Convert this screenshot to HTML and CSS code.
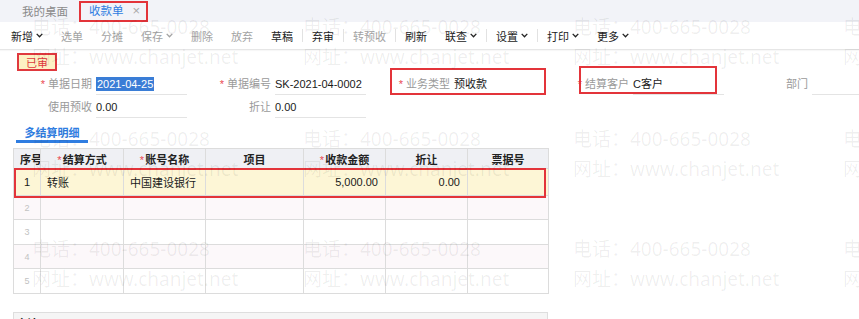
FILE: index.html
```html
<!DOCTYPE html>
<html lang="zh-CN">
<head>
<meta charset="utf-8">
<title>收款单</title>
<link rel="stylesheet" href="styles.css">
</head>
<body>
<div class="page">
  <div class="tabbar">
    <div class="tab">我的桌面</div>
    <div class="tab active"><span>收款单</span><span class="close">×</span></div>
  </div>

  <div class="toolbar">
    <span class="tb">新增<svg class="chev" viewBox="0 0 7 5"><path d="M0.7 0.9 L3.5 3.8 L6.3 0.9"/></svg></span>
    <span class="tb dis">选单</span>
    <span class="tb dis">分摊</span>
    <span class="tb dis">保存<svg class="chev" viewBox="0 0 7 5"><path d="M0.7 0.9 L3.5 3.8 L6.3 0.9"/></svg></span>
    <span class="tb dis">删除</span>
    <span class="tb dis">放弃</span>
    <span class="tb">草稿</span>
    <span class="sep"></span>
    <span class="tb">弃审</span>
    <span class="sep"></span>
    <span class="tb dis">转预收</span>
    <span class="sep"></span>
    <span class="tb">刷新</span>
    <span class="tb">联查<svg class="chev" viewBox="0 0 7 5"><path d="M0.7 0.9 L3.5 3.8 L6.3 0.9"/></svg></span>
    <span class="sep"></span>
    <span class="tb">设置<svg class="chev" viewBox="0 0 7 5"><path d="M0.7 0.9 L3.5 3.8 L6.3 0.9"/></svg></span>
    <span class="sep"></span>
    <span class="tb">打印<svg class="chev" viewBox="0 0 7 5"><path d="M0.7 0.9 L3.5 3.8 L6.3 0.9"/></svg></span>
    <span class="tb">更多<svg class="chev" viewBox="0 0 7 5"><path d="M0.7 0.9 L3.5 3.8 L6.3 0.9"/></svg></span>
  </div>

  <div class="content">
    <div class="stamp">已审</div>

    <div class="form">
      <div class="field"><div class="lbl"><span class="req">*</span>单据日期</div><div class="val"><span class="sel">2021-04-25</span></div></div>
      <div class="field"><div class="lbl"><span class="req">*</span>单据编号</div><div class="val">SK-2021-04-0002</div></div>
      <div class="field"><div class="lbl"><span class="req">*</span>业务类型</div><div class="val">预收款</div></div>
      <div class="field"><div class="lbl"><span class="req">*</span>结算客户</div><div class="val">C客户</div></div>
      <div class="field"><div class="lbl">部门</div><div class="val"></div></div>

      <div class="field"><div class="lbl">使用预收</div><div class="val">0.00</div></div>
      <div class="field"><div class="lbl">折让</div><div class="val">0.00</div></div>
    </div>

    <div class="subtab">多结算明细</div>

    <table class="grid">
      <colgroup>
        <col class="c-no"><col class="c-way"><col class="c-acc"><col class="c-proj"><col class="c-amt"><col class="c-disc"><col class="c-bill">
      </colgroup>
      <thead>
        <tr>
          <th>序号</th>
          <th><span class="req">*</span>结算方式</th>
          <th><span class="req">*</span>账号名称</th>
          <th>项目</th>
          <th><span class="req">*</span>收款金额</th>
          <th>折让</th>
          <th>票据号</th>
        </tr>
      </thead>
      <tbody>
        <tr class="r-active">
          <td class="no">1</td><td>转账</td><td>中国建设银行</td><td></td><td class="num">5,000.00</td><td class="num">0.00</td><td></td>
        </tr>
        <tr class="r-even h24"><td class="no dim">2</td><td></td><td></td><td></td><td></td><td></td><td></td></tr>
        <tr class="r-odd h25"><td class="no dim">3</td><td></td><td></td><td></td><td></td><td></td><td></td></tr>
        <tr class="r-even h24"><td class="no dim">4</td><td></td><td></td><td></td><td></td><td></td><td></td></tr>
        <tr class="r-odd h25"><td class="no dim">5</td><td></td><td></td><td></td><td></td><td></td><td></td></tr>
      </tbody>
    </table>

    <div class="total">
      <span class="t-label">合计</span>
      <span class="t-num">5,000.00</span>
      <span class="t-num">0.00</span>
      <span></span>
    </div>
  </div>

  <div class="mark mark-tab"></div>
  <div class="mark mark-type"></div>
  <div class="mark mark-cust"></div>
  <div class="mark mark-row"></div>

  <div class="wm">
    <span class="w a1 x1">电话：400-665-0028</span>
    <span class="w a2 x1">网址：www.chanjet.net</span>
    <span class="w a1 x2">电话：400-665-0028</span>
    <span class="w a2 x2">网址：www.chanjet.net</span>
    <span class="w a1 x3">电话：400-665-0028</span>
    <span class="w a2 x3">网址：www.chanjet.net</span>
    <span class="w a1 x4">电话：400-665-0028</span>
    <span class="w a2 x4">网址：www.chanjet.net</span>

    <span class="w b1 x1">电话：400-665-0028</span>
    <span class="w b2 x1">网址：www.chanjet.net</span>
    <span class="w b1 x2">电话：400-665-0028</span>
    <span class="w b2 x2">网址：www.chanjet.net</span>
    <span class="w b1 x3">电话：400-665-0028</span>
    <span class="w b2 x3">网址：www.chanjet.net</span>
    <span class="w b1 x4">电话：400-665-0028</span>
    <span class="w b2 x4">网址：www.chanjet.net</span>

    <span class="w c1 x1">电话：400-665-0028</span>
    <span class="w c2 x1">网址：www.chanjet.net</span>
    <span class="w c1 x2">电话：400-665-0028</span>
    <span class="w c2 x2">网址：www.chanjet.net</span>
    <span class="w c1 x3">电话：400-665-0028</span>
    <span class="w c2 x3">网址：www.chanjet.net</span>
    <span class="w c1 x4">电话：400-665-0028</span>
    <span class="w c2 x4">网址：www.chanjet.net</span>
  </div>
</div>
</body>
</html>
```

FILE: styles.css
```css
* { box-sizing: border-box; }
html, body { margin: 0; padding: 0; }
body {
  width: 859px;
  height: 319px;
  overflow: hidden;
  background: #fff;
  font-family: "Liberation Sans", "Noto Sans CJK SC", sans-serif;
  font-size: 11px;
  color: #222;
}
.page { position: relative; width: 859px; height: 319px; overflow: hidden; }

/* tab bar */
.tabbar {
  height: 22px;
  background: #f2f3f8;
  display: flex;
  align-items: stretch;
  padding-left: 22px;
}
.tab { display: flex; align-items: center; font-size: 11.5px; color: #8a8a8a; }
.tab.active {
  margin-left: 13px;
  padding: 0 8px;
  color: #2f7de1;
  border-bottom: 2px solid #2f7de1;
}
.tab .close { margin-left: 9px; color: #aaa; font-size: 13px; }

/* toolbar */
.toolbar {
  height: 28px;
  display: flex;
  align-items: center;
  padding-left: 2px;
  border-bottom: 1px solid #e6e6e6;
  box-shadow: 0 1px 1px rgba(0,0,0,0.03);
}
.tb { display: flex; align-items: center; padding: 0 9px; color: #222; white-space: nowrap; }
.tb.dis { color: #a3a3a3; }
.chev { width: 7px; height: 5px; margin-left: 3px; }
.chev path { fill: none; stroke: currentColor; stroke-width: 1.3; }
.sep { width: 1px; height: 13px; background: #e2e2e2; }

/* content */
.content { display: flex; flex-direction: column; align-items: flex-start; }
.stamp {
  margin: 3px 0 0 17px;
  width: 40px;
  height: 18px;
  border: 2px solid #e0393e;
  background: #fdf1c4;
  color: #e0393e;
  display: flex;
  align-items: center;
  justify-content: center;
  font-size: 11px;
}

.form {
  margin-top: 3px;
  padding-left: 8px;
  display: grid;
  grid-template-columns: repeat(5, 179px);
  row-gap: 2px;
}
.field { display: flex; height: 21px; }
.lbl { width: 84px; text-align: right; color: #9a9a9a; line-height: 21px; white-space: nowrap; }
.req { color: #ea4a50; margin-right: 3px; }
.val {
  width: 91px;
  margin-left: 4px;
  border-bottom: 1px solid #e4e4e4;
  line-height: 20px;
  color: #1a1a1a;
  white-space: nowrap;
}
.sel { background: #3a7dd6; color: #fff; padding: 1px 1px; }

.subtab {
  margin: 3px 0 0 16px;
  width: 72px;
  height: 22px;
  padding-top: 3px;
  text-align: center;
  color: #2f7de1;
  font-weight: bold;
  border-bottom: 3px solid #2f7de1;
}

.grid {
  margin: 5px 0 0 13px;
  border-collapse: collapse;
  table-layout: fixed;
  width: 535px;
}
.c-no { width: 27px; }
.c-way { width: 83px; }
.c-acc { width: 82px; }
.c-proj { width: 98px; }
.c-amt { width: 82px; }
.c-disc { width: 82px; }
.c-bill { width: 81px; }
.grid th, .grid td { border: 1px solid #dcdcdc; padding: 0 6px; white-space: nowrap; overflow: hidden; }
.grid th { height: 20px; background: #eff0f4; font-weight: bold; text-align: center; color: #222; }
.grid th .req { margin-right: 1px; font-weight: normal; }
.grid td { color: #1a1a1a; }
.grid td.no { text-align: center; padding: 0; }
.grid td.dim { color: #c2c2c2; font-size: 9px; }
.grid td.num { text-align: right; padding-right: 7px; }
.r-active td { height: 27px; background: #fdf6d6; }
.r-even td { background: #fcf8fa; }
.h24 td { height: 24px; }
.h25 td { height: 25px; }

.total {
  margin: 18px 0 0 13px;
  width: 535px;
  height: 30px;
  border: 1px solid #dedede;
  background: #f5f5f5;
  display: grid;
  grid-template-columns: 289px 82px 82px 1fr;
  padding-top: 4px;
  font-weight: bold;
  line-height: 14px;
}
.t-label { padding-left: 2px; }
.t-num { text-align: right; padding-right: 5px; }

/* red annotation frames */
.mark { position: absolute; border: 2px solid #e3343a; pointer-events: none; }
.mark-tab { left: 79px; top: 1px; width: 69px; height: 21px; }
.mark-type { left: 390px; top: 68px; width: 156px; height: 27px; }
.mark-cust { left: 579px; top: 66px; width: 138px; height: 28px; }
.mark-row { left: 14px; top: 168px; width: 532px; height: 30px; }

/* watermark */
.wm { position: absolute; left: 0; top: 0; width: 859px; height: 319px; pointer-events: none; }
.w {
  position: absolute;
  font-family: "Noto Sans", "Noto Sans CJK SC", sans-serif;
  font-size: 19px;
  line-height: 19px;
  color: rgba(0, 0, 0, 0.065);
  white-space: nowrap;
}
.x1 { left: 32px; }
.x2 { left: 303px; }
.x3 { left: 573px; }
.x4 { left: 843px; }
.a1 { top: 18px; }
.a2 { top: 48px; }
.b1 { top: 130px; }
.b2 { top: 160px; }
.c1 { top: 240px; }
.c2 { top: 270px; }
```
